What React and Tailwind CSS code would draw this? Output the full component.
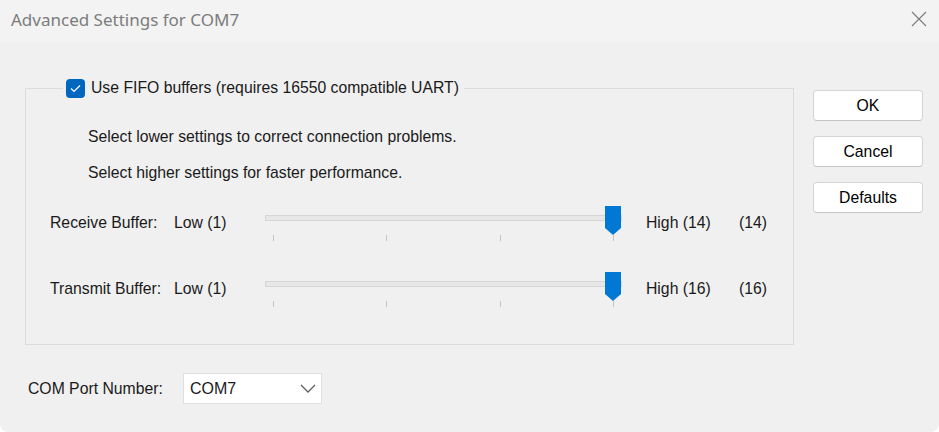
const dlg = { fontFamily: '"Liberation Sans", Arial, sans-serif' };

function Thumb() {
  return (
    <svg className="absolute left-[339px] top-0" width="18" height="31" viewBox="0 0 18 31">
      <path d="M1 1 H17 V23 L9 30 L1 23 Z" fill="#0078d4" />
    </svg>
  );
}

function SliderRow({ label, high, value }) {
  return (
    <div className="flex items-start h-[66px]">
      <div className="w-[124px] mt-[8px] leading-[20px]">{label}</div>
      <div className="w-[91px] mt-[8px] leading-[20px]">Low (1)</div>
      <div className="relative w-[381px] h-[36px]">
        <div className="mt-[10px] w-[357px] h-[6px] border border-[#d6d6d6] bg-[#e7e7e7]" />
        <div className="flex justify-between w-[349px] pl-[8px] mt-[14px]">
          <span className="w-px h-[6px] bg-[#c4c4c4]" />
          <span className="w-px h-[6px] bg-[#c4c4c4]" />
          <span className="w-px h-[6px] bg-[#c4c4c4]" />
          <span className="w-px h-[6px] bg-[#c4c4c4]" />
        </div>
        <Thumb />
      </div>
      <div className="w-[93px] mt-[8px] leading-[20px]">{high}</div>
      <div className="mt-[8px] leading-[20px]">{value}</div>
    </div>
  );
}

function Btn({ children }) {
  return (
    <button className="w-[110px] h-[31px] bg-white border border-[#d4d4d4] border-b-[#c4c4c4] rounded-[4px] text-[15.75px] text-black">
      {children}
    </button>
  );
}

export default function App() {
  return (
    <div className="w-[939px] h-[432px] bg-[#f0f0f0] text-[15.75px] text-[#1a1a1a] overflow-hidden rounded-b-[8px]" style={dlg}>
      <div className="h-[42px] bg-[#f3f3f3] flex items-start justify-between pl-[11px] pr-[12px] pt-[7px]">
        <span className="text-[17px] text-[#7c7c7c]" style={{ fontFamily: '"Noto Sans", "Open Sans", sans-serif' }}>
          Advanced Settings for COM7
        </span>
        <svg width="16" height="16" viewBox="0 0 16 16" className="mt-[4px]">
          <path d="M1 1 L15 15 M15 1 L1 15" stroke="#7a7a7a" strokeWidth="1.1" fill="none" />
        </svg>
      </div>

      <div className="flex items-start pl-[25px] mt-[36px]">
        <fieldset className="w-[769px] h-[267px] border border-[#dcdcdc]">
          <legend className="ml-[37px] px-[3px] flex items-center h-[20px]">
            <span className="w-[19px] h-[19px] rounded-[4px] bg-[#0067c0] flex items-center justify-center mr-[6px]">
              <svg width="11" height="9" viewBox="0 0 11 9">
                <path d="M1 4.5 L4 7.5 L10 1.5" stroke="white" strokeWidth="1.2" fill="none" />
              </svg>
            </span>
            <span className="leading-[20px] pr-[2px]">Use FIFO buffers (requires 16550 compatible UART)</span>
          </legend>
          <div className="pl-[62px] pt-[29px] leading-[20px]">
            Select lower settings to correct connection problems.
          </div>
          <div className="pl-[62px] mt-[16px] leading-[20px]">Select higher settings for faster performance.</div>
          <div className="pl-[24px] mt-[22px]">
            <SliderRow label="Receive Buffer:" high="High (14)" value="(14)" />
            <SliderRow label="Transmit Buffer:" high="High (16)" value="(16)" />
          </div>
        </fieldset>

        <div className="ml-[19px] mt-[12px] flex flex-col gap-[15px]">
          <Btn>OK</Btn>
          <Btn>Cancel</Btn>
          <Btn>Defaults</Btn>
        </div>
      </div>

      <div className="flex items-center pl-[28px] mt-[28px]">
        <div className="w-[155px]">COM Port Number:</div>
        <div className="w-[139px] h-[31px] bg-white border border-[#e0e0e0] flex items-center justify-between pl-[6px] pr-[5px]">
          <span className="text-[16px]">COM7</span>
          <svg width="16" height="9" viewBox="0 0 16 9">
            <path d="M1 1 L8 8 L15 1" stroke="#5f5f5f" strokeWidth="1.3" fill="none" />
          </svg>
        </div>
      </div>
    </div>
  );
}
